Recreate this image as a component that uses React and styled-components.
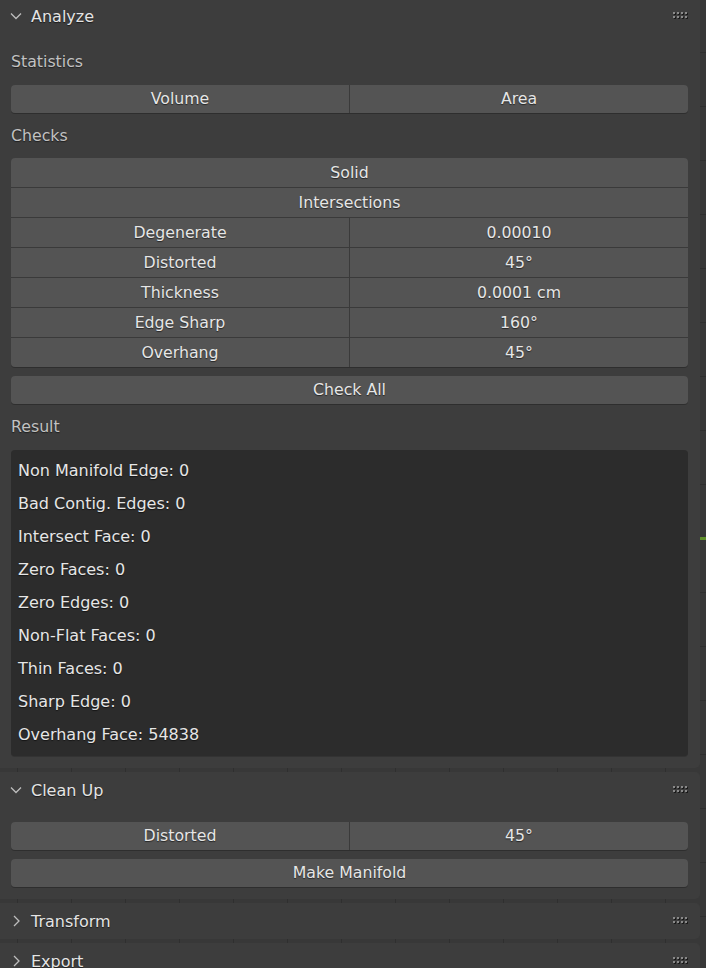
import React from "react";
import styled, { createGlobalStyle } from "styled-components";

const GlobalStyle = createGlobalStyle`
html, body {
  margin: 0;
  padding: 0;
  background: #383838;
}
body {
  font-family: "DejaVu Sans", "Liberation Sans", sans-serif;
  -webkit-font-smoothing: antialiased;
}
`;

const results = [
  ["Non Manifold Edge", "0"],
  ["Bad Contig. Edges", "0"],
  ["Intersect Face", "0"],
  ["Zero Faces", "0"],
  ["Zero Edges", "0"],
  ["Non-Flat Faces", "0"],
  ["Thin Faces", "0"],
  ["Sharp Edge", "0"],
  ["Overhang Face", "54838"],
];

const checks = [
  ["Degenerate", "0.00010"],
  ["Distorted", "45°"],
  ["Thickness", "0.0001 cm"],
  ["Edge Sharp", "160°"],
  ["Overhang", "45°"],
];

const Chevron = ({ open }) => (
  <svg width="14" height="14" viewBox="0 0 14 14">
    {open ? (
      <polyline points="2,4.5 7,9.5 12,4.5" fill="none" stroke="#bdbdbd" strokeWidth="1.3" />
    ) : (
      <polyline points="5,2 10,7 5,12" fill="none" stroke="#bdbdbd" strokeWidth="1.3" />
    )}
  </svg>
);

const Grip = () => (
  <svg width="16" height="8" viewBox="0 0 16 8">
    {[0, 1].map((r) =>
      [0, 1, 2, 3].map((c) => (
        <React.Fragment key={r + "-" + c}>
          <rect x={c * 4 + 1} y={r * 4 + 1} width="2" height="2" fill="#1a1a1a" />
          <rect x={c * 4} y={r * 4} width="2" height="2" fill="#8a8a8a" />
        </React.Fragment>
      ))
    )}
  </svg>
);

const App = () => {
  return (
    <Page>
      <GlobalStyle />
      <Panel first>
        <Header>
          <Chevron open />
          <HeaderTitle>Analyze</HeaderTitle>
          <Grip />
        </Header>
        <Body>
          <Label>Statistics</Label>
          <ButtonRow>
            <Btn>Volume</Btn>
            <Btn>Area</Btn>
          </ButtonRow>
          <Label tight>Checks</Label>
          <Column>
            <Btn>Solid</Btn>
            <Btn>Intersections</Btn>
            {checks.map(([name, value]) => (
              <SplitRow key={name}>
                <Btn>{name}</Btn>
                <Btn>{value}</Btn>
              </SplitRow>
            ))}
          </Column>
          <ButtonRow spaced>
            <Btn>Check All</Btn>
          </ButtonRow>
          <Label>Result</Label>
          <ResultBox>
            {results.map(([name, value]) => (
              <ResultLine key={name}>
                {name}: {value}
              </ResultLine>
            ))}
          </ResultBox>
        </Body>
      </Panel>

      <Panel>
        <Header>
          <Chevron open />
          <HeaderTitle>Clean Up</HeaderTitle>
          <Grip />
        </Header>
        <Body cleanup>
          <ButtonRow>
            <Btn>Distorted</Btn>
            <Btn>45°</Btn>
          </ButtonRow>
          <ButtonRow spaced>
            <Btn>Make Manifold</Btn>
          </ButtonRow>
        </Body>
      </Panel>

      <Panel>
        <Header>
          <Chevron />
          <HeaderTitle>Transform</HeaderTitle>
          <Grip />
        </Header>
      </Panel>

      <Panel>
        <Header>
          <Chevron />
          <HeaderTitle>Export</HeaderTitle>
          <Grip />
        </Header>
      </Panel>
    </Page>
  );
};

const Page = styled.div`
  width: 706px;
  height: 968px;
  overflow: hidden;
  display: flex;
  flex-direction: column;
  gap: 4px;
  background-color: #383838;
  background-image:
    linear-gradient(to bottom, transparent 537px, #5f8f2a 537px, #5f8f2a 540px, transparent 540px),
    linear-gradient(to right, transparent 17px, #2f2f2f 17px, #2f2f2f 18px, transparent 18px),
    linear-gradient(to bottom, transparent 52px, #2f2f2f 52px, #2f2f2f 53px, transparent 53px);
  background-size: 100% 100%, 54px 100%, 100% 54px;
  background-repeat: no-repeat, repeat, repeat;
  box-sizing: border-box;
  padding-right: 6px;
`;

const Panel = styled.section`
  flex: none;
  width: 700px;
  background: #3d3d3d;
  border-radius: ${(p) => (p.first ? "0 0 5px 0" : "0 5px 5px 0")};
  margin-top: ${(p) => (p.first ? "-2px" : "0")};
`;

const Header = styled.div`
  height: 36px;
  display: flex;
  align-items: center;
  padding: 0 11px 0 9px;
  gap: 8px;
  svg:first-child {
    flex: none;
  }
`;

const HeaderTitle = styled.div`
  flex: 1;
  color: #e4e4e4;
  font-size: 16px;
  text-shadow: 0 1px 1px rgba(0, 0, 0, 0.6);
`;

const Body = styled.div`
  padding: ${(p) => (p.cleanup ? "14px 12px 12px 11px" : "0 12px 12px 11px")};
  display: flex;
  flex-direction: column;
`;

const Label = styled.div`
  height: 26px;
  margin: 10px 0 ${(p) => (p.tight ? "9px" : "10px")} 0;
  line-height: 26px;
  color: #c2c2c2;
  font-size: 15.75px;
  text-shadow: 0 1px 1px rgba(0, 0, 0, 0.5);
  &:first-child {
    margin-top: 15px;
  }
`;

const ButtonRow = styled.div`
  display: flex;
  gap: 1px;
  background: #3a3a3a;
  border-radius: 4px;
  overflow: hidden;
  margin-top: ${(p) => (p.spaced ? "9px" : "0")};
  box-shadow: 0 1px 0 #2e2e2e;
`;

const Column = styled.div`
  display: flex;
  flex-direction: column;
  gap: 1px;
  background: #3a3a3a;
  border-radius: 4px;
  overflow: hidden;
  box-shadow: 0 1px 0 #2e2e2e;
`;

const SplitRow = styled.div`
  display: flex;
  gap: 1px;
`;

const Btn = styled.div`
  flex: 1;
  height: 29px;
  line-height: 29px;
  background: #545454;
  text-align: center;
  color: #e6e6e6;
  font-size: 15.75px;
  text-shadow: 0 1px 1px rgba(0, 0, 0, 0.55);
  white-space: nowrap;
  ${ButtonRow} > & {
    height: 28px;
    line-height: 28px;
  }
`;

const ResultBox = styled.div`
  background: #2c2c2c;
  border-radius: 4px;
  padding: 4px 7px 5px;
  display: flex;
  flex-direction: column;
  box-shadow: 0 1px 0 #333333;
`;

const ResultLine = styled.div`
  height: 33px;
  line-height: 33px;
  color: #e6e6e6;
  font-size: 16px;
  text-shadow: 0 1px 1px rgba(0, 0, 0, 0.55);
`;

export default App;
